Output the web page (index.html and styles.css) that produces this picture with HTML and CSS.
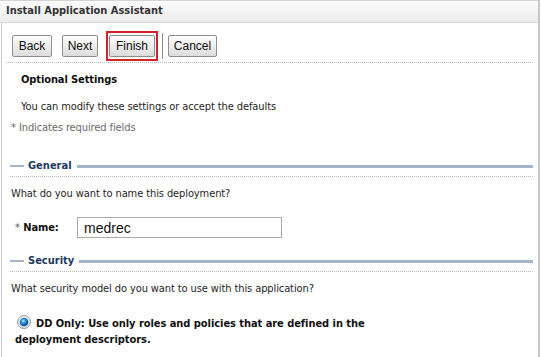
FILE: index.html
```html
<!DOCTYPE html>
<html>
<head>
<meta charset="utf-8">
<link rel="stylesheet" href="styles.css">
</head>
<body>
<div class="panel">
  <div class="titlebar">Install Application Assistant</div>
  <div class="toolbar">
    <button class="btn btn-back">Back</button>
    <button class="btn btn-next">Next</button>
    <span class="highlight"><button class="btn btn-finish">Finish</button></span>
    <span class="sep"></span>
    <button class="btn btn-cancel">Cancel</button>
  </div>
  <div class="content">
    <div class="subtitle">Optional Settings</div>
    <div class="intro">You can modify these settings or accept the defaults</div>
    <div class="required">* Indicates required fields</div>

    <div class="section">
      <span class="dash"></span><span class="section-title">General</span><span class="rule"></span>
    </div>
    <div class="question">What do you want to name this deployment?</div>
    <div class="field">
      <label class="field-label"><span class="star">*</span> Name:</label>
      <input class="textbox" type="text" value="medrec">
    </div>

    <div class="section section-security">
      <span class="dash"></span><span class="section-title">Security</span><span class="rule"></span>
    </div>
    <div class="question">What security model do you want to use with this application?</div>
    <div class="option">
      <svg class="radio" width="14" height="14" viewBox="0 0 14 14">
        <defs>
          <radialGradient id="ball" cx="0.42" cy="0.38" r="0.6">
            <stop offset="0" stop-color="#c8f0ff"/>
            <stop offset="0.35" stop-color="#3aa2e6"/>
            <stop offset="1" stop-color="#0a3f7c"/>
          </radialGradient>
          <linearGradient id="ring" x1="0" y1="0" x2="0" y2="1">
            <stop offset="0" stop-color="#f4f4f4"/>
            <stop offset="1" stop-color="#d8dde2"/>
          </linearGradient>
        </defs>
        <circle cx="7" cy="7" r="6.5" fill="url(#ring)" stroke="#8a98a6" stroke-width="1"/>
        <circle cx="7" cy="7" r="4.3" fill="url(#ball)"/>
      </svg>DD Only: Use only roles and policies that are defined in the deployment descriptors.
    </div>
  </div>
</div>
</body>
</html>
```

FILE: styles.css
```css
html, body {
  margin: 0;
  padding: 0;
  background: #fff;
}
body {
  width: 541px;
  height: 357px;
  overflow: hidden;
  font-family: "DejaVu Sans Condensed", "DejaVu Sans", Tahoma, sans-serif;
  font-size: 11px;
  line-height: 14px;
  color: #1e1e1e;
}
.panel {
  margin-left: 1px;
  width: 539px;
  height: 357px;
  border-left: 1px solid #c9c9c9;
  border-right: 2px solid #c8c8c8;
  box-sizing: border-box;
}
.titlebar {
  height: 23px;
  box-sizing: border-box;
  border-top: 1px solid #d4d4d4;
  border-bottom: 1px solid #dadada;
  background: linear-gradient(#fbfbfb, #f2f2f2 60%, #ebebeb);
  font-weight: bold;
  font-size: 11px;
  color: #333;
  padding: 3px 0 0 6px;
  margin-left: -2px;
}
.toolbar {
  display: flex;
  align-items: center;
  height: 30px;
  padding: 8px 0 1px 6px;
  border-bottom: 1px dotted #b8b8b8;
  margin: 0 5px 0 4px;
}
.btn {
  font-family: "Liberation Sans", Arial, sans-serif;
  font-size: 12px;
  color: #111;
  height: 22px;
  padding: 0;
  border: 1px solid #8e8e8e;
  border-radius: 2px;
  background: linear-gradient(#fdfdfd, #ececec 55%, #dcdcdc);
  margin-right: 10px;
  text-align: center;
}
.btn-back { width: 40px; }
.btn-next { width: 36px; margin-right: 8px; }
.btn-finish { width: 46px; margin-right: 0; }
.btn-cancel { width: 49px; }
.highlight {
  display: inline-flex;
  align-items: center;
  height: 26px;
  border: 2px solid #d2232a;
  padding: 0 1px;
  margin-right: 4px;
}
.sep {
  width: 1px;
  height: 26px;
  background: #8a8a8a;
  margin-right: 5px;
}
.content {
  padding-left: 9px;
  letter-spacing: -0.1px;
}
.subtitle {
  font-weight: bold;
  padding-left: 10px;
  margin-top: 10px;
  color: #111;
}
.intro {
  padding-left: 10px;
  margin-top: 13px;
}
.required {
  color: #6a6a6a;
  margin-top: 7px;
}
.section {
  display: flex;
  align-items: center;
  margin-top: 24px;
  margin-left: -1px;
  margin-right: 5px;
  padding-bottom: 3px;
  border-bottom: 1px dotted #b8b8b8;
}
.section-security {
  margin-top: 16px;
}
.dash {
  width: 14px;
  height: 2px;
  background: #a3b5c7;
  margin-right: 4px;
}
.section-title {
  font-weight: bold;
  font-size: 11px;
  letter-spacing: 0;
  color: #1c3a60;
  margin-right: 5px;
}
.rule {
  flex: 1;
  height: 3px;
  background: #a3b5c7;
}
.question {
  margin-top: 10px;
}
.field {
  display: flex;
  align-items: center;
  margin-top: 16px;
  padding-left: 4px;
}
.field-label {
  font-weight: bold;
  width: 62px;
  color: #111;
}
.star {
  font-weight: normal;
  color: #555;
}
.textbox {
  width: 205px;
  height: 21px;
  box-sizing: border-box;
  border: 1px solid #aaaaaa;
  font-family: "Liberation Sans", Arial, sans-serif;
  font-size: 14px;
  letter-spacing: 0;
  padding: 0 6px;
  color: #111;
  margin: 0;
}
.option {
  width: 380px;
  font-weight: bold;
  font-size: 11px;
  line-height: 16px;
  letter-spacing: -0.05px;
  margin-top: 19px;
  padding-left: 4px;
  color: #111;
}
.radio {
  display: inline-block;
  vertical-align: -2px;
  margin: 0 5px 0 2px;
}
```
